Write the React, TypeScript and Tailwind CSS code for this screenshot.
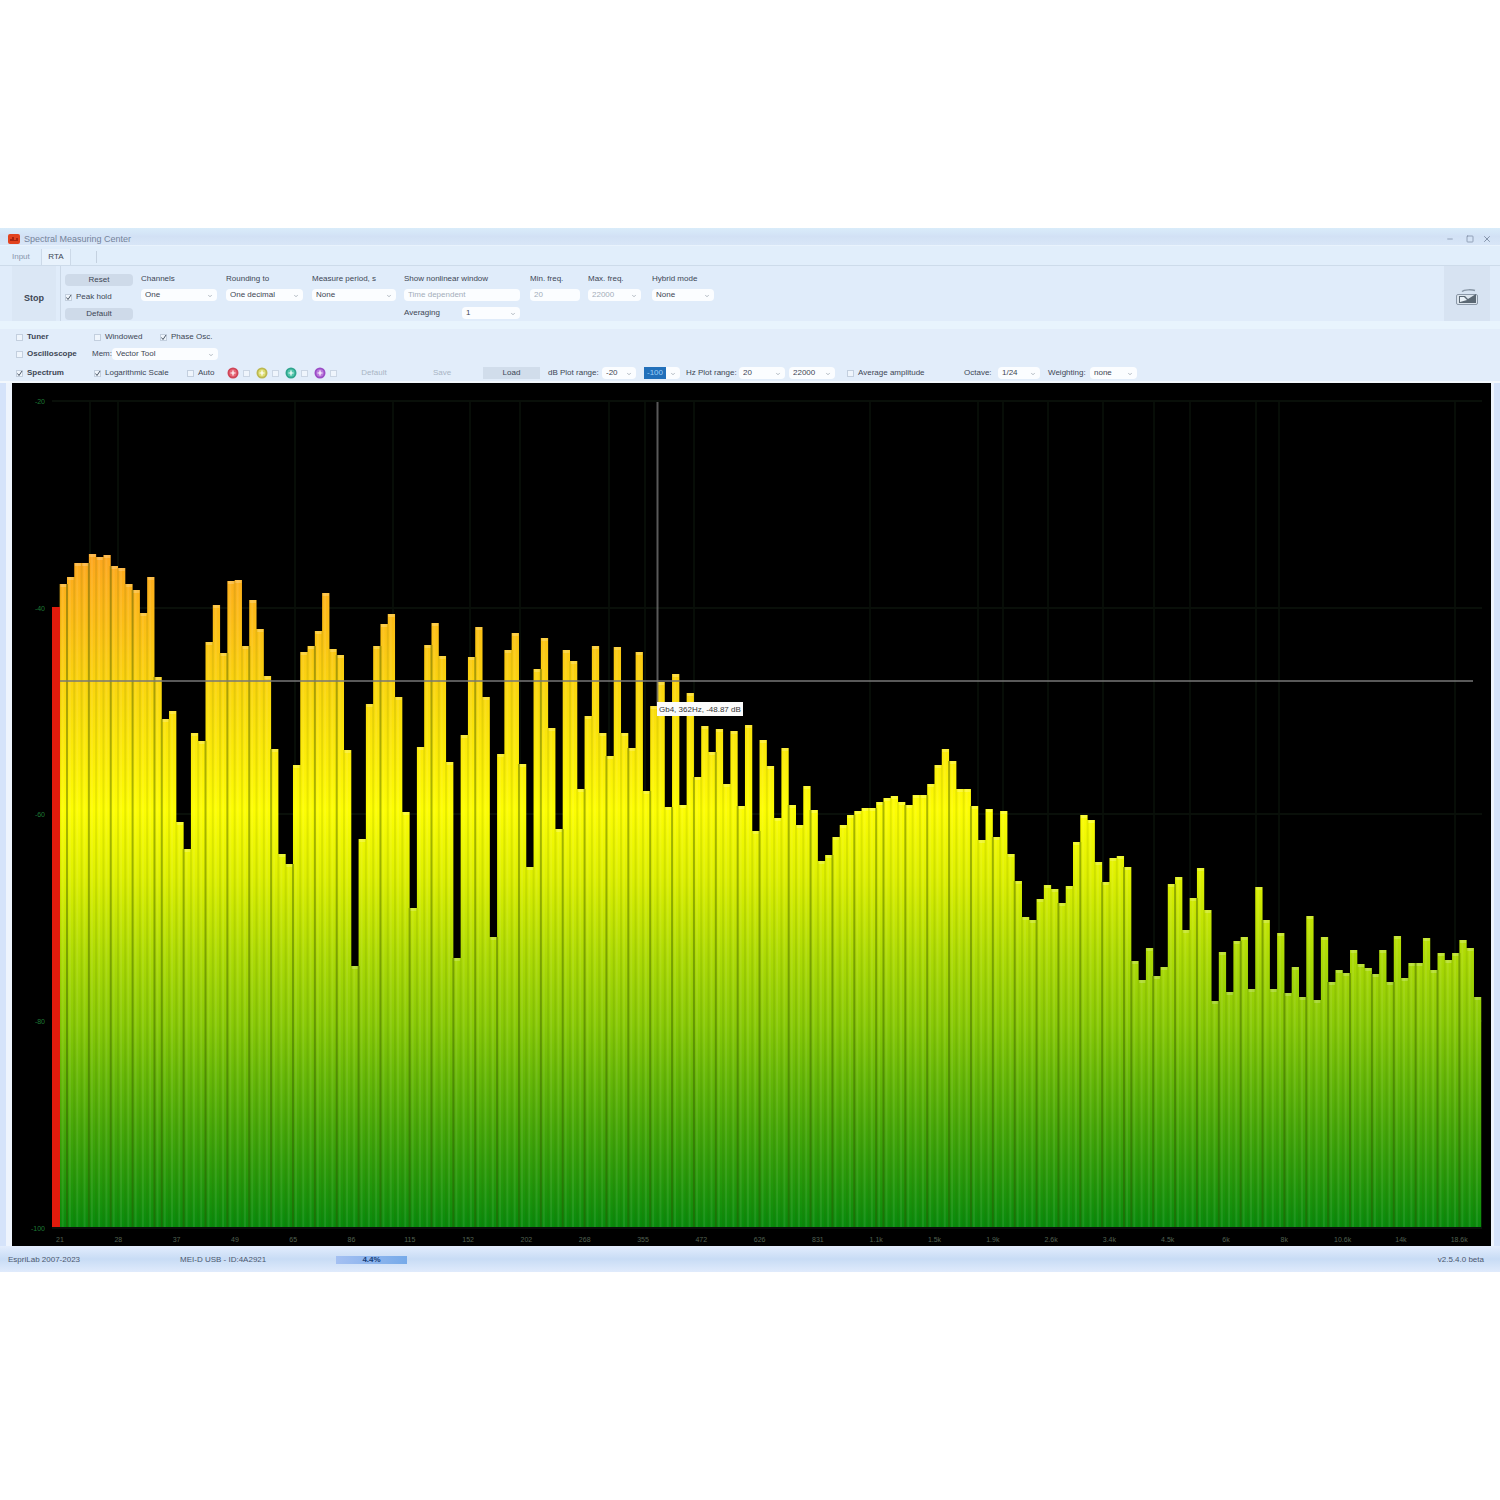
import type { ReactNode } from "react";
import { ChevronDown, Minus, Square, X } from "lucide-react";

// top edge of every band, in plot coordinates
const BANDS = [
  584, 577, 563, 563, 554, 557, 555, 566, 568, 584, 590, 613, 577, 677, 719, 711, 822, 849, 733, 741,
  642, 605, 653, 581, 580, 646, 600, 629, 676, 749, 854, 864, 765, 652, 646, 631, 593, 649, 655, 750,
  966, 839, 704, 646, 624, 614, 697, 812, 908, 747, 645, 623, 656, 762, 958, 735, 657, 627, 697, 937,
  754, 650, 633, 764, 867, 669, 638, 728, 829, 650, 661, 789, 716, 646, 733, 756, 647, 733, 748, 652,
  791, 706, 682, 807, 674, 805, 693, 777, 726, 752, 729, 784, 731, 806, 725, 831, 740, 766, 818, 748,
  805, 825, 786, 810, 861, 855, 837, 825, 815, 811, 808, 808, 802, 798, 796, 802, 805, 795, 795, 784,
  765, 749, 761, 789, 789, 806, 840, 809, 837, 811, 854, 881, 917, 920, 899, 885, 889, 903, 886, 842,
  815, 820, 862, 882, 858, 856, 867, 961, 980, 948, 976, 967, 884, 877, 930, 898, 868, 910, 1001, 952,
  992, 941, 937, 989, 887, 920, 989, 933, 993, 967, 997, 916, 1000, 937, 982, 970, 973, 950, 964, 968,
  974, 950, 982, 936, 978, 963, 963, 938, 970, 953, 960, 953, 940, 948, 997,
];

const STEP = 7.29;
const LEFT = 59.7;
const FLOOR = 1227;

const DB_LABELS = [
  { y: 402, text: "-20" },
  { y: 609, text: "-40" },
  { y: 815, text: "-60" },
  { y: 1022, text: "-80" },
  { y: 1229, text: "-100" },
];

const HZ_LABELS = [
  "21", "28", "37", "49", "65", "86", "115", "152", "202", "268", "355", "472", "626", "831", "1.1k",
  "1.5k", "1.9k", "2.6k", "3.4k", "4.5k", "6k", "8k", "10.6k", "14k", "18.6k",
];

const GRID_X = [90, 118, 295, 393, 470, 520, 609, 645, 694, 870, 978, 1003, 1048, 1103, 1154, 1190, 1256, 1279, 1455];

// the darker seam falls on every third band, its phase moves along the axis
function isSeam(i: number) {
  if (i < 14) return i % 3 === 1;
  if (i < 47) return i % 3 === 2;
  if (i < 99) return i % 3 === 0;
  if (i < 113) return i % 3 === 1;
  if (i < 147) return i % 3 === 2;
  return i % 3 === 0;
}

function Combo({ label, value, className = "", muted = false, selected = false }: {
  label: string;
  value: string;
  className?: string;
  muted?: boolean;
  selected?: boolean;
}) {
  return (
    <span className={`relative block h-3 shrink-0 rounded-sm bg-[#fbfdff] ${className}`}>
      <select
        aria-label={label}
        className={`block h-3 w-full appearance-none bg-transparent pl-1 text-[8px] leading-3 outline-none ${muted ? "text-[#a3adba]" : "text-[#3d4654]"}`}
      >
        <option>{value}</option>
      </select>
      {selected && (
        <span className="pointer-events-none absolute inset-y-0 left-0 w-[22px] bg-[#2270ba] text-center leading-3 text-[#9cd0fa]">
          {value}
        </span>
      )}
      <ChevronDown className="pointer-events-none absolute top-1 right-1 size-1.5 text-[#6d7887]" />
    </span>
  );
}

function Field({ label, className = "", children }: { label: string; className?: string; children: ReactNode }) {
  return (
    <div className={`flex shrink-0 flex-col gap-1 ${className}`}>
      <span className="h-3 whitespace-nowrap leading-3">{label}</span>
      {children}
    </div>
  );
}

function Check({ label, checked = false, className = "" }: { label: string; checked?: boolean; className?: string }) {
  return (
    <label className={`flex h-3 shrink-0 items-center gap-1 whitespace-nowrap ${className}`}>
      <span className="relative block size-[7px] shrink-0">
        <input
          type="checkbox"
          defaultChecked={checked}
          className="peer block size-[7px] appearance-none border border-[#c3cfde] bg-[#eff5fc]"
        />
        <svg viewBox="0 0 7 7" className="pointer-events-none absolute inset-0 hidden size-[7px] peer-checked:block">
          <path d="M1.5 3.5 3 5.5 6 1" fill="none" stroke="#4b5766" strokeWidth="1" />
        </svg>
      </span>
      {label}
    </label>
  );
}

function Preset({ label, ring, fill }: { label: string; ring: string; fill: string }) {
  return (
    <div className="flex w-[29px] shrink-0 items-center gap-1">
      <button aria-label={label} className="block size-3">
        <svg viewBox="0 0 12 12" className="size-3">
          <circle cx="6" cy="6" r="4.6" fill={fill} stroke={ring} strokeWidth="1.8" />
          <path d="M3.5 6h5M6 3.5v5" stroke="#fff" strokeWidth="1.2" />
        </svg>
      </button>
      <input
        type="checkbox"
        aria-label={`${label} visible`}
        className="block size-[7px] appearance-none border border-[#cbd6e4] bg-[#eff5fc]"
      />
    </div>
  );
}

function TitleBar() {
  return (
    <header className="flex h-[17px] items-center gap-1 bg-gradient-to-b from-[#d9ecfa] via-[#d2e1f5] to-[#d8e6f7] pt-1 pr-2 pl-2 text-[#74839b]">
      <svg viewBox="0 0 12 10" className="h-2.5 w-3">
        <rect width="12" height="10" rx="2" fill="#e2431f" />
        <path d="M2 7V5h2V3h2v3h2V4h2v3z" fill="#a82410" />
      </svg>
      <h1 className="flex-1 text-[9px]">Spectral Measuring Center</h1>
      <button aria-label="Minimize" className="mr-2"><Minus className="size-2" /></button>
      <button aria-label="Maximize" className="mr-1"><Square className="size-2" /></button>
      <button aria-label="Close"><X className="size-2.5" /></button>
    </header>
  );
}

function Ribbon() {
  return (
    <section className="flex h-[56px] border-t border-[#cddbea] bg-[#e0ecfa]">
      <button className="ml-3 w-[44px] shrink-0 bg-[#dbe7f5] pt-2 text-[9px] font-bold">Stop</button>
      <div className="ml-1 border-l border-[#cbd8e7]" />
      <div className="mt-2 ml-1 flex w-[68px] shrink-0 flex-col gap-[5px]">
        <button className="h-3 rounded-sm bg-[#cedae9] leading-3">Reset</button>
        <Check label="Peak hold" checked />
        <button className="h-3 rounded-sm bg-[#cedae9] leading-3">Default</button>
      </div>
      <div className="mt-[7px] ml-2 flex flex-1 items-start">
        <Field label="Channels" className="w-[85px]">
          <Combo label="Channels" value="One" className="w-[76px]" />
        </Field>
        <Field label="Rounding to" className="w-[86px]">
          <Combo label="Rounding to" value="One decimal" className="w-[77px]" />
        </Field>
        <Field label="Measure period, s" className="w-[92px]">
          <Combo label="Measure period" value="None" className="w-[84px]" />
        </Field>
        <Field label="Show nonlinear window" className="w-[126px]">
          <input
            aria-label="Show nonlinear window"
            defaultValue="Time dependent"
            className="block h-3 w-[116px] rounded-sm bg-[#fbfdff] pl-1 text-[8px] text-[#a3adba]"
          />
          <div className="mt-0.5 flex w-[116px] items-center justify-between">
            <span>Averaging</span>
            <Combo label="Averaging" value="1" className="w-[58px]" />
          </div>
        </Field>
        <Field label="Min. freq." className="w-[58px]">
          <input
            aria-label="Minimum frequency"
            defaultValue="20"
            className="block h-3 w-[50px] rounded-sm bg-[#fbfdff] pl-1 text-[8px] text-[#a3adba]"
          />
        </Field>
        <Field label="Max. freq." className="w-[64px]">
          <Combo label="Maximum frequency" value="22000" muted className="w-[53px]" />
        </Field>
        <Field label="Hybrid mode" className="w-[62px]">
          <Combo label="Hybrid mode" value="None" className="w-[62px]" />
        </Field>
      </div>
      <button aria-label="Save picture" className="mr-2.5 flex w-[46px] shrink-0 items-center justify-center bg-[#d7e3f2] pt-2">
        <svg viewBox="0 0 24 20" className="h-5 w-6">
          <path d="M7 3.5C9 1.5 17 1.5 20 2.5" fill="none" stroke="#8997a6" strokeWidth="1.5" />
          <rect x="1.5" y="6.5" width="21" height="10" rx="1.5" fill="#dbe4ed" stroke="#8b98a8" />
          <path d="M4 15V8h6l3 3 8-5v9z" fill="#5b6874" />
          <path d="M5 9h4l3 3-7 2z" fill="#e9f1f8" />
        </svg>
      </button>
    </section>
  );
}

function Options() {
  return (
    <section className="bg-[#e2edfa]">
      <div className="h-2 bg-[#e8f4fd]" />
      <div className="flex h-4 items-center pl-4">
        <Check label="Tuner" className="w-[78px] font-bold" />
        <Check label="Windowed" className="w-[66px]" />
        <Check label="Phase Osc." checked />
      </div>
      <div className="flex h-[18px] items-center pl-4">
        <Check label="Oscilloscope" className="w-[76px] font-bold" />
        <span className="w-5">Mem:</span>
        <Combo label="Oscilloscope view" value="Vector Tool" className="w-[106px]" />
      </div>
      <div className="flex h-5 items-center overflow-hidden border-b-2 border-[#f3f8fd] pt-0.5 pl-4 whitespace-nowrap">
        <Check label="Spectrum" checked className="w-[78px] font-bold" />
        <Check label="Logarithmic Scale" checked className="w-[93px]" />
        <Check label="Auto" className="w-[40px]" />
        <Preset label="Red trace" ring="#cf4557" fill="#e66878" />
        <Preset label="Yellow trace" ring="#bcb850" fill="#dede72" />
        <Preset label="Green trace" ring="#2fa58d" fill="#54c6ad" />
        <Preset label="Violet trace" ring="#9b4cc5" fill="#ba79dd" />
        <button className="ml-1 h-3 w-[54px] shrink-0 leading-3 text-[#a9b5c4]">Default</button>
        <button className="ml-2 h-3 w-[66px] shrink-0 leading-3 text-[#a9b5c4]">Save</button>
        <button className="ml-2 h-3 w-[57px] shrink-0 bg-[#d1ddeb] leading-3">Load</button>
        <span className="ml-2 w-[54px] shrink-0">dB Plot range:</span>
        <Combo label="dB from" value="-20" className="mr-2 w-[34px]" />
        <Combo label="dB to" value="-100" selected className="mr-1.5 w-[36px]" />
        <span className="w-[53px] shrink-0">Hz Plot range:</span>
        <Combo label="Hz from" value="20" className="mr-1 w-[46px]" />
        <Combo label="Hz to" value="22000" className="mr-3 w-[46px]" />
        <Check label="Average amplitude" className="w-[117px]" />
        <span className="w-[34px] shrink-0">Octave:</span>
        <Combo label="Octave" value="1/24" className="mr-2 w-[42px]" />
        <span className="w-[42px] shrink-0">Weighting:</span>
        <Combo label="Weighting" value="none" className="w-[47px]" />
      </div>
    </section>
  );
}

function Spectrum() {
  const skyline = BANDS.map((y, i) => `V${y}H${(LEFT + STEP * (i + 1)).toFixed(2)}`).join("");

  return (
    <svg
      viewBox="12 383 1479 863"
      className="block w-full bg-black"
      fontFamily="Liberation Sans, Arial, sans-serif"
      role="img"
      aria-label="Spectrum"
    >
      <defs>
        <linearGradient id="level" gradientUnits="userSpaceOnUse" x1="0" y1="554" x2="0" y2={FLOOR}>
          <stop offset="0" stopColor="#fda61e" />
          <stop offset="0.1" stopColor="#fcbd16" />
          <stop offset="0.22" stopColor="#fadb0c" />
          <stop offset="0.38" stopColor="#fdfd02" />
          <stop offset="0.48" stopColor="#def000" />
          <stop offset="0.59" stopColor="#b0dc04" />
          <stop offset="0.7" stopColor="#88c906" />
          <stop offset="0.85" stopColor="#48a808" />
          <stop offset="1" stopColor="#088a0c" />
        </linearGradient>
      </defs>

      {GRID_X.map((x) => (
        <line key={x} x1={x} x2={x} y1="402" y2={FLOOR} stroke="#070d07" strokeWidth="2" />
      ))}
      {DB_LABELS.map(({ y }) => (
        <line key={y} x1="52" x2="1482" y1={y - 1} y2={y - 1} stroke="#090f09" strokeWidth="2" />
      ))}

      <path d={`M${LEFT} ${FLOOR}${skyline}V${FLOOR}Z`} fill="url(#level)" />
      {BANDS.map((y, i) => {
        const x = LEFT + STEP * i;
        const seamTop = Math.max(y, BANDS[i - 1] ?? y);
        return (
          <g key={i}>
            <rect x={x + 2} y={y} width="2" height={FLOOR - y} fill="#fff" opacity="0.08" />
            <rect x={x + 0.5} y={y} width={STEP - 1} height="3" fill="#fff" opacity="0.2" />
            <rect
              x={x - 1}
              y={seamTop}
              width="2"
              height={FLOOR - seamTop}
              fill="#2f4a00"
              opacity={isSeam(i) ? 0.4 : 0.1}
            />
          </g>
        );
      })}
      <rect x="52" y="607" width="8" height={FLOOR - 607} fill="#e01b0c" />

      <line x1="60" x2="1473" y1="681" y2="681" stroke="#777777" strokeWidth="2" opacity="0.75" />
      <line x1="657.5" x2="657.5" y1="402" y2="706" stroke="#777777" strokeWidth="2" opacity="0.75" />

      {DB_LABELS.map(({ y, text }) => (
        <text key={text} x="45" y={y + 2} fontSize="7" textAnchor="end" fill="#1d7a35">{text}</text>
      ))}
      {HZ_LABELS.map((text, i) => (
        <text key={text} x={60 + 58.3 * i} y="1242" fontSize="7" textAnchor="middle" fill="#526152">{text}</text>
      ))}

      <rect x="657" y="702" width="86" height="14" fill="#fbfbfb" />
      <text x="659" y="712" fontSize="8" fill="#333333">Gb4, 362Hz, -48.87 dB</text>
    </svg>
  );
}

function StatusBar() {
  return (
    <footer className="flex h-[26px] items-center bg-gradient-to-b from-[#e3edfd] via-[#c8dcf5] to-[#e0ebfc] pt-0.5 pr-4 pl-2 text-[#4b586f]">
      <span className="w-[172px]">EspriLab 2007-2023</span>
      <span className="w-[156px]">MEI-D USB - ID:4A2921</span>
      <span className="h-2 w-[71px] bg-gradient-to-r from-[#a4c0f2] to-[#76aae9] text-center font-bold leading-2 text-[#173e78]">
        4.4%
      </span>
      <span className="ml-auto">v2.5.4.0 beta</span>
    </footer>
  );
}

export default function App() {
  return (
    <main className="min-h-screen bg-white py-[228px] font-['Liberation_Sans',Arial,sans-serif] text-[8px] leading-3 text-[#3d4654]">
      <div className="bg-[#e0ecfa]">
        <TitleBar />
        <nav className="flex h-5 items-center border-t border-[#e9f3fd] bg-[#e1eefb] pt-0.5">
          <button className="ml-3 w-[29px] text-left text-[#8996ab]">Input</button>
          <button className="h-4 w-[30px] border-x border-[#ccd9e8] bg-[#e8f2fc]">RTA</button>
          <span className="h-3 w-[26px] border-r border-[#c4d1e0]" />
        </nav>
        <Ribbon />
        <Options />
        <div className="bg-[#d5e3fa] pr-[6px] pl-[6px]">
          <div className="border-r-[3px] border-l-[6px] border-[#eef4fd]">
            <Spectrum />
          </div>
        </div>
        <StatusBar />
      </div>
    </main>
  );
}
